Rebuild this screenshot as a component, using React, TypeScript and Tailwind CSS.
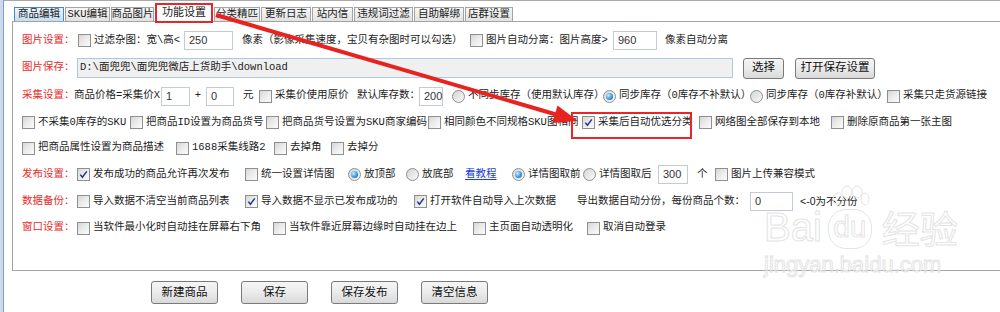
import type { ReactNode } from 'react';

const tabs = [
  { label: '商品编辑', w: 'w-[50px]', kind: 'hover' },
  { label: 'SKU编辑', w: 'w-[45px]' },
  { label: '商品图片', w: 'w-[43px]' },
  { label: '功能设置', w: 'w-[58px]', kind: 'active' },
  { label: '分类精匹', w: 'w-[46px]' },
  { label: '更新日志', w: 'w-[50px]' },
  { label: '站内信', w: 'w-[41px]' },
  { label: '违规词过滤', w: 'w-[59px]' },
  { label: '自助解绑', w: 'w-[50px]' },
  { label: '店群设置', w: 'w-[48px]' },
];

function Box({ checked }: { checked?: boolean }) {
  return (
    <span className="relative flex items-center justify-center w-[13px] h-[13px] shrink-0 border border-[#8e8f8f] bg-linear-to-br from-[#d6d6d6] via-[#ececec] to-[#fbfbfb]">
      {checked && (
        <svg width="9" height="9" viewBox="0 0 9 9">
          <path d="M1.3 4.6 L3.4 7.2 L7.8 1.4" fill="none" stroke="#24358c" strokeWidth="1.5" />
        </svg>
      )}
    </span>
  );
}

function Radio({ checked }: { checked?: boolean }) {
  return (
    <span className="flex items-center justify-center w-[13px] h-[13px] shrink-0 rounded-full border border-[#8e8f8f] bg-linear-to-br from-[#d4d4d4] to-[#fafafa]">
      {checked && (
        <span className="w-[7px] h-[7px] rounded-full bg-[radial-gradient(circle_at_35%_35%,#c8efff,#3b9be0_55%,#15508f)]" />
      )}
    </span>
  );
}

function Seg({ w = '', children }: { w?: string; children: ReactNode }) {
  return <div className={`flex items-center shrink-0 whitespace-nowrap ${w}`}>{children}</div>;
}

function Check({ w, checked, children }: { w?: string; checked?: boolean; children: ReactNode }) {
  return (
    <Seg w={w}>
      <Box checked={checked} />
      <span className="ml-[3px]">{children}</span>
    </Seg>
  );
}

function Opt({ w, checked, children }: { w?: string; checked?: boolean; children: ReactNode }) {
  return (
    <Seg w={w}>
      <Radio checked={checked} />
      <span className="ml-[3px]">{children}</span>
    </Seg>
  );
}

function Field({ w, value }: { w: string; value: string }) {
  return (
    <div
      className={`flex items-center shrink-0 h-[19px] pl-[4px] border border-[#c3ccd6] bg-white text-[#333] font-['Liberation_Sans',sans-serif] text-[11px] ${w}`}
    >
      {value}
    </div>
  );
}

function Label({ w, children }: { w: string; children: ReactNode }) {
  return <Seg w={`${w} text-[#ea2a2a]`}>{children}</Seg>;
}

function Btn({ w, h, children }: { w: string; h: string; children: ReactNode }) {
  return (
    <div
      className={`flex items-center justify-center shrink-0 rounded-[3px] border border-[#7a7a7a] bg-linear-to-b from-[#f5f5f5] via-[#ebebeb] to-[#d9d9d9] text-[11.5px] text-[#111] ${w} ${h}`}
    >
      {children}
    </div>
  );
}

export default function App() {
  return (
    <div className="relative w-[1000px] h-[312px] overflow-hidden bg-white flex text-[10.5px] text-[#1c1c1c] font-['Liberation_Mono','Noto_Sans_CJK_SC',monospace]">
      <div className="w-[3px] h-full bg-[#cbd9ea]" />
      <div className="w-px h-full bg-[#7d9fc8]" />

      <div className="flex-1 flex flex-col pl-[8px] border-t border-[#a9a9a9]">
        {/* tab strip */}
        <div className="flex items-end h-[20px] pl-[2px] gap-[1px]">
          {tabs.map(t =>
            t.kind === 'active' ? (
              <div
                key={t.label}
                className={`relative z-10 flex items-center justify-center h-[20px] mb-[-2px] border-2 border-[#e8262a] bg-white text-[11px] ${t.w}`}
              >
                {t.label}
              </div>
            ) : (
              <div
                key={t.label}
                className={`flex items-center justify-center h-[14px] border border-b-0 whitespace-nowrap ${t.w} ${
                  t.kind === 'hover'
                    ? 'border-[#4a88bd] bg-linear-to-b from-[#eef6fd] to-[#c4def4]'
                    : 'border-[#a4a4a4] bg-linear-to-b from-[#f7f7f7] to-[#e2e2e2]'
                }`}
              >
                {t.label}
              </div>
            )
          )}
        </div>

        {/* settings panel */}
        <div className="h-[250px] border-t border-l border-b border-[#a3a3a3] pt-[5px] pl-[9px] flex flex-col">
          <div className="flex items-center h-[27px]">
            <Label w="w-[56px]">图片设置：</Label>
            <Check w="w-[106px]">过滤杂图：宽\高&lt;</Check>
            <Field w="w-[49px]" value="250" />
            <Seg w="w-[237px] pl-[9px]">像素（影像采集速度，宝贝有杂图时可以勾选）</Seg>
            <Check w="w-[143px]">图片自动分离：图片高度&gt;</Check>
            <Field w="w-[44px]" value="960" />
            <Seg w="pl-[8px]">像素自动分离</Seg>
          </div>

          <div className="flex items-center h-[28px]">
            <Label w="w-[55px]">图片保存：</Label>
            <div className="flex items-center shrink-0 w-[656px] h-[20px] pl-[2px] border border-[#adc8e2] bg-[#f0f0f0] text-[10.5px] text-[#222]">
              D:\面兜兜\面兜兜微店上货助手\download
            </div>
            <div className="ml-[10px]">
              <Btn w="w-[41px]" h="h-[21px]">选择</Btn>
            </div>
            <div className="ml-[11px]">
              <Btn w="w-[80px]" h="h-[21px]">打开保存设置</Btn>
            </div>
          </div>

          <div className="flex items-center h-[28px]">
            <Label w="w-[52px]">采集设置：</Label>
            <Seg w="w-[87px]">商品价格=采集价X</Seg>
            <Field w="w-[29px]" value="1" />
            <Seg w="w-[16px] justify-center">+</Seg>
            <Field w="w-[28px]" value="0" />
            <Seg w="w-[25px] pl-[9px]">元</Seg>
            <Check w="w-[98px]">采集价使用原价</Check>
            <Seg w="w-[62px]">默认库存数：</Seg>
            <Field w="w-[24px]" value="200" />
            <div className="w-[9px] shrink-0" />
            <Opt w="w-[151px]">不同步库存（使用默认库存）</Opt>
            <Opt w="w-[147px]" checked>同步库存（0库存不补默认）</Opt>
            <Opt w="w-[137px]">同步库存（0库存补默认）</Opt>
            <Check>采集只走货源链接</Check>
          </div>

          <div className="flex items-center h-[25px]">
            <Check w="w-[108px]">不采集0库存的SKU</Check>
            <Check w="w-[136px]">把商品ID设置为商品货号</Check>
            <Check w="w-[162px]">把商品货号设置为SKU商家编码</Check>
            <Check w="w-[154px]">相同颜色不同规格SKU图相同</Check>
            <div className="relative flex items-center shrink-0 w-[117px]">
              <div className="absolute left-[-11px] top-[-3px] w-[121px] h-[27px] border-2 border-[#e8262a]" />
              <Box checked />
              <span className="ml-[3px] whitespace-nowrap">采集后自动优选分类</span>
            </div>
            <Check w="w-[132px]">网络图全部保存到本地</Check>
            <Check>删除原商品第一张主图</Check>
          </div>

          <div className="flex items-center h-[26px]">
            <Check w="w-[154px]">把商品属性设置为商品描述</Check>
            <Check w="w-[98px]">1688采集线路2</Check>
            <Check w="w-[57px]">去掉角</Check>
            <Check>去掉分</Check>
          </div>

          <div className="flex items-center h-[27px]">
            <Label w="w-[55px]">发布设置：</Label>
            <Check w="w-[168px]" checked>发布成功的商品允许再次发布</Check>
            <Check w="w-[103px]">统一设置详情图</Check>
            <Opt w="w-[58px]" checked>放顶部</Opt>
            <Opt w="w-[59px]">放底部</Opt>
            <Seg w="w-[47px]">
              <span className="text-[#1b3fd6] underline underline-offset-2">看教程</span>
            </Seg>
            <Opt w="w-[71px]" checked>详情图取前</Opt>
            <Opt w="w-[75px]">详情图取后</Opt>
            <Field w="w-[30px]" value="300" />
            <Seg w="w-[27px] pl-[9px]">个</Seg>
            <Check>图片上传兼容模式</Check>
          </div>

          <div className="flex items-center h-[27px]">
            <Label w="w-[55px]">数据备份：</Label>
            <Check w="w-[168px]">导入数据不清空当前商品列表</Check>
            <Check w="w-[169px]" checked>导入数据不显示已发布成功的</Check>
            <Check w="w-[163px]" checked>打开软件自动导入上次数据</Check>
            <Seg w="w-[173px]">导出数据自动分份，每份商品个数：</Seg>
            <Field w="w-[43px]" value="0" />
            <Seg w="pl-[7px] font-['Liberation_Sans','Noto_Sans_CJK_SC',sans-serif]">&lt;-0为不分份</Seg>
          </div>

          <div className="flex items-center h-[26px]">
            <Label w="w-[55px]">窗口设置：</Label>
            <Check w="w-[196px]">当软件最小化时自动挂在屏幕右下角</Check>
            <Check w="w-[200px]">当软件靠近屏幕边缘时自动挂在边上</Check>
            <Check w="w-[114px]">主页面自动透明化</Check>
            <Check>取消自动登录</Check>
          </div>
        </div>

        {/* bottom buttons */}
        <div className="flex pt-[10px] pl-[139px] gap-[23px]">
          <Btn w="w-[67px]" h="h-[23px]">新建商品</Btn>
          <Btn w="w-[67px]" h="h-[23px]">保存</Btn>
          <Btn w="w-[67px]" h="h-[23px]">保存发布</Btn>
          <Btn w="w-[67px]" h="h-[23px]">清空信息</Btn>
        </div>
      </div>

      {/* watermark */}
      <div className="absolute left-[764px] top-[205px] pointer-events-none font-['Liberation_Sans',sans-serif] text-transparent [-webkit-text-stroke:1px_#e4e4e4]">
        <div className="flex items-end">
          <span className="text-[40px] leading-[44px]">Bai</span>
          <span className="relative ml-[4px] flex items-center justify-center w-[48px] h-[44px]">
            <svg className="absolute left-[4px] top-[-20px]" width="40" height="24" viewBox="0 0 40 24">
              <g fill="none" stroke="#e4e4e4" strokeWidth="1">
                <ellipse cx="8" cy="14" rx="5" ry="6" />
                <ellipse cx="17" cy="7" rx="5" ry="6" />
                <ellipse cx="27" cy="7" rx="5" ry="6" />
                <ellipse cx="35" cy="14" rx="4" ry="6" />
              </g>
            </svg>
            <span className="absolute inset-x-[2px] top-[4px] bottom-0 rounded-[18px] border border-[#e4e4e4]" />
            <span className="text-[30px] leading-[34px]">du</span>
          </span>
          <span className="ml-[8px] text-[38px] leading-[44px] font-['Noto_Sans_CJK_SC',sans-serif]">经验</span>
        </div>
        <div className="mt-[4px] text-[22px] leading-[24px]">jingyan.baidu.com</div>
      </div>

      {/* annotation arrow */}
      <svg className="absolute left-0 top-0 pointer-events-none" width="1000" height="312" viewBox="0 0 1000 312">
        <line x1="216" y1="15" x2="556" y2="114.5" stroke="#e8231f" strokeWidth="4" />
        <polygon points="578,121 552.4,122.9 557.5,105.6" fill="#e8231f" />
      </svg>
    </div>
  );
}
